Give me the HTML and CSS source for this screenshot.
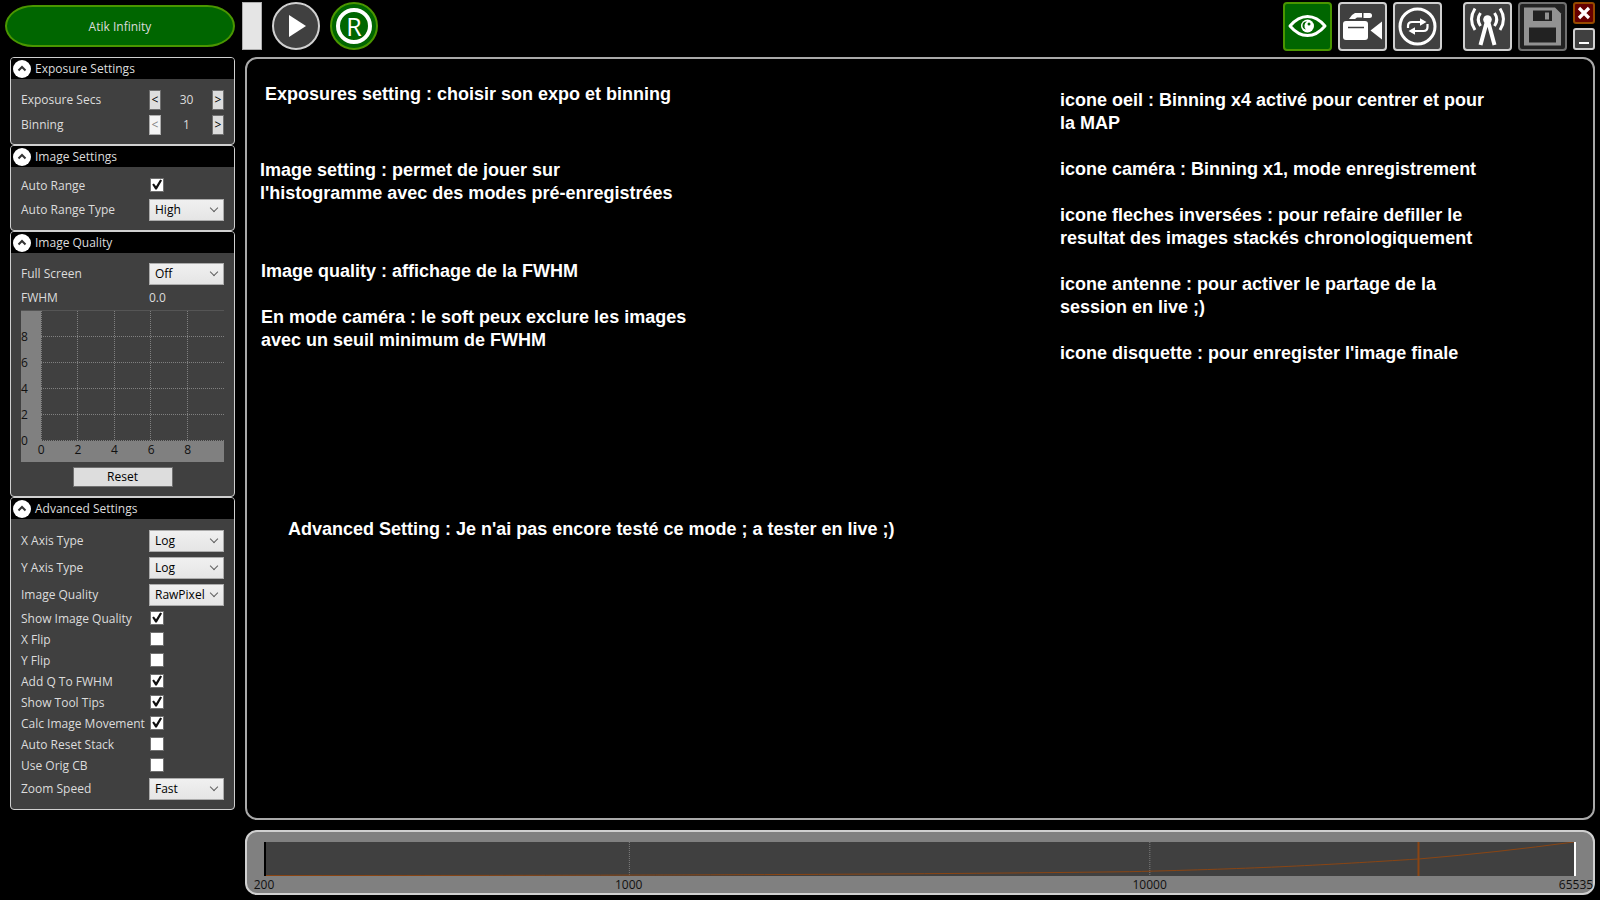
FILE: index.html
```html
<!DOCTYPE html>
<html lang="en">
<head>
<meta charset="utf-8">
<title>Atik Infinity</title>
<link rel="stylesheet" href="styles.css">
</head>
<body>
<div class="app">
  <header class="toolbar">
    <button class="camera-name">Atik Infinity</button>
    <button class="slim" aria-label="Collapse panel"></button>
    <button class="round play" aria-label="Play"><svg viewBox="0 0 44 44"><path d="M15 11l17 11-17 11z" fill="#fff"/></svg></button>
    <button class="round reset-stack" aria-label="Reset stack"><span class="ring">R</span></button>
    <div class="modes">
      <button class="tool active" aria-label="Preview"><svg viewBox="2 2 45 45"><path d="M7 24Q15 14.500 24.500 14.500T42 24Q34 33.500 24.500 33.500T7 24z" fill="none" stroke="#fff" stroke-width="3" stroke-linejoin="round"/><circle cx="24.500" cy="24" r="6.500" fill="#fff"/><path d="M24 19.500a4 4 0 0 0-1 8 5 5 0 0 1 1-8z" fill="#060"/><circle cx="26" cy="22" r="1.500" fill="#060"/></svg></button>
      <button class="tool" aria-label="Record"><svg viewBox="2 2 45 45" fill="#fff"><rect x="5" y="19" width="25" height="19" rx="3"/><path d="M10 25.500h16" stroke="#404040" stroke-width="1.500"/><path d="M32.500 28.500L44 19.500v18zM11 17l3-4 3-2h7v4.500h-5L17 17z"/><path d="M25.500 11h6q2.500 0 2.500 2.500T31.500 16h-6z"/></svg></button>
      <button class="tool" aria-label="Replay"><svg viewBox="2 2 45 45"><g fill="none" stroke="#fff"><circle cx="24.500" cy="24.500" r="17.500" stroke-width="3"/><path d="M15 26v-2q0-4 4-4h9M34.500 22v3q0 4-4 4H21" stroke-width="2.200"/></g><path d="M27 16.200l6.500 3.800-6.500 3.800zM22 25.200L15.500 29l6.500 3.800z" fill="#fff"/></svg></button>
      <button class="tool share" aria-label="Broadcast"><svg viewBox="2 2 45 45" fill="none" stroke="#fff"><circle cx="24.500" cy="17.500" r="4.300" fill="#fff" stroke="none"/><path d="M24 19L17.500 43M25 19l6.500 24" stroke-width="4"/><path d="M12 6.500q-7 11 0 21.500M37 6.500q7 11 0 21.500M17.500 11q-4.500 6.500 0 13M31.500 11q4.500 6.500 0 13" stroke-width="3"/></svg></button>
      <button class="tool save" aria-label="Save"><svg viewBox="2 2 45 45"><path d="M6 5.500h31l6 6v32H6z" fill="#929292"/><path d="M15 8.500h19V19H15zM11 25.500h27v15H11z" fill="#222"/><path d="M27 10.500h4v7h-4z" fill="#929292"/></svg></button>
      <div class="window-buttons">
        <button class="win close" aria-label="Close"><svg viewBox="0 0 18 18"><path d="M4 4l10 10M14 4L4 14" stroke="#fff" stroke-width="3.200"/></svg></button>
        <button class="win" aria-label="Minimize"><svg viewBox="0 0 18 18"><path d="M4 13h10" stroke="#fff" stroke-width="2"/></svg></button>
      </div>
    </div>
  </header>

  <aside class="sidebar">
    <section class="panel">
      <h2 class="panel-title"><button class="fold" aria-label="Collapse"><svg viewBox="0 0 18 18"><path d="M5.500 10.500L9 7l3.500 3.500"/></svg></button>Exposure Settings</h2>
      <div class="panel-body exposure">
        <div class="row stepper-row"><span>Exposure Secs</span><div class="stepper"><button>&lt;</button><output>30</output><button>&gt;</button></div></div>
        <div class="row stepper-row"><span>Binning</span><div class="stepper"><button disabled>&lt;</button><output>1</output><button>&gt;</button></div></div>
      </div>
    </section>

    <section class="panel">
      <h2 class="panel-title"><button class="fold" aria-label="Collapse"><svg viewBox="0 0 18 18"><path d="M5.500 10.500L9 7l3.500 3.500"/></svg></button>Image Settings</h2>
      <div class="panel-body range">
        <div class="row check-row"><label for="auto-range">Auto Range</label><input type="checkbox" id="auto-range" checked></div>
        <div class="row select-row"><label for="range-type">Auto Range Type</label><div class="combo"><select id="range-type"><option>High</option></select></div></div>
      </div>
    </section>

    <section class="panel">
      <h2 class="panel-title"><button class="fold" aria-label="Collapse"><svg viewBox="0 0 18 18"><path d="M5.500 10.500L9 7l3.500 3.500"/></svg></button>Image Quality</h2>
      <div class="panel-body quality">
        <div class="row select-row"><label for="full-screen">Full Screen</label><div class="combo"><select id="full-screen"><option>Off</option></select></div></div>
        <div class="row"><span>FWHM</span><span>0.0</span></div>
        <div class="chart">
          <div class="y-axis"><span>8</span><span>6</span><span>4</span><span>2</span><span>0</span></div>
          <svg class="grid" viewBox="0 0 183 130" preserveAspectRatio="none"><path d="M.5 0v130M36.500 0v130M73.500 0v130M109.500 0v130M146.500 0v130M0 25.500h183M0 51.500h183M0 77.500h183M0 103.500h183M0 129.500h183"/></svg>
          <div class="x-axis"><span>0</span><span>2</span><span>4</span><span>6</span><span>8</span></div>
        </div>
        <button class="reset">Reset</button>
      </div>
    </section>

    <section class="panel">
      <h2 class="panel-title"><button class="fold" aria-label="Collapse"><svg viewBox="0 0 18 18"><path d="M5.500 10.500L9 7l3.500 3.500"/></svg></button>Advanced Settings</h2>
      <div class="panel-body advanced">
        <div class="row select-row"><label for="x-axis">X Axis Type</label><div class="combo"><select id="x-axis"><option>Log</option></select></div></div>
        <div class="row select-row"><label for="y-axis">Y Axis Type</label><div class="combo"><select id="y-axis"><option>Log</option></select></div></div>
        <div class="row select-row"><label for="iq">Image Quality</label><div class="combo"><select id="iq"><option>RawPixel</option></select></div></div>
        <div class="checks">
          <div class="row check-row"><label for="c1">Show Image Quality</label><input type="checkbox" id="c1" checked></div>
          <div class="row check-row"><label for="c2">X Flip</label><input type="checkbox" id="c2"></div>
          <div class="row check-row"><label for="c3">Y Flip</label><input type="checkbox" id="c3"></div>
          <div class="row check-row"><label for="c4">Add Q To FWHM</label><input type="checkbox" id="c4" checked></div>
          <div class="row check-row"><label for="c5">Show Tool Tips</label><input type="checkbox" id="c5" checked></div>
          <div class="row check-row"><label for="c6">Calc Image Movement</label><input type="checkbox" id="c6" checked></div>
          <div class="row check-row"><label for="c7">Auto Reset Stack</label><input type="checkbox" id="c7"></div>
          <div class="row check-row"><label for="c8">Use Orig CB</label><input type="checkbox" id="c8"></div>
        </div>
        <div class="row select-row"><label for="zoom">Zoom Speed</label><div class="combo"><select id="zoom"><option>Fast</option></select></div></div>
      </div>
    </section>
  </aside>

  <main class="viewport">
    <div class="notes-left">
      <p class="note-exposure">Exposures setting : choisir son expo et binning</p>
      <p class="note-image">Image setting : permet de jouer sur<br>l'histogramme avec des modes pré-enregistrées</p>
      <div class="note-quality">
        <p>Image quality : affichage de la FWHM</p>
        <p>En mode caméra : le soft peux exclure les images<br>avec un seuil minimum de FWHM</p>
      </div>
      <p class="note-advanced">Advanced Setting : Je n'ai pas encore testé ce mode ; a tester en live ;)</p>
    </div>
    <div class="notes-right">
      <p>icone oeil : Binning x4 activé pour centrer et pour<br>la MAP</p>
      <p>icone caméra : Binning x1, mode enregistrement</p>
      <p>icone fleches inversées : pour refaire defiller le<br>resultat des images stackés chronologiquement</p>
      <p>icone antenne : pour activer le partage de la<br>session en live ;)</p>
      <p>icone disquette : pour enregister l'image finale</p>
    </div>
  </main>

  <footer class="histogram">
    <svg class="curve" viewBox="0 0 1312 34" preserveAspectRatio="none">
      <path class="tick" d="M364.500 0v34M886.500 0v34"/>
      <path class="line" d="M0 33.500C300 33.500 600 33 866 29.700C1000 26.500 1060 23 1156 17C1210 12.500 1260 7 1312 0"/>
      <path class="marker" d="M1156 0v34"/>
    </svg>
    <div class="scale">
      <span style="left:0%">200</span><span style="left:27.8%">1000</span><span style="left:67.5%">10000</span><span style="left:100%">65535</span>
    </div>
  </footer>
</div>
</body>
</html>
```

FILE: styles.css
```css
* { box-sizing: border-box; }
body { margin: 0; background: #000; color: #dcdcdc; font: 12px/16px "Open Sans", "Noto Sans", sans-serif; }
button, select, input { font: inherit; margin: 0; padding: 0; }
button svg { display: block; width: 100%; height: 100%; }
h2, p { margin: 0; }

.app {
  display: grid;
  grid-template: 57px minmax(773px, 1fr) 65px / 225px minmax(0, 1fr);
  grid-template-areas: "top top" "side view" "side hist";
  gap: 0 10px;
  min-height: 100vh;
  padding: 0 5px 5px 10px;
}

/* Toolbar */
.toolbar { grid-area: top; display: flex; align-items: flex-start; padding-top: 2px; margin-left: -5px; }
.camera-name { width: 230px; height: 42px; margin: 3px 7px 0 0; padding-top: 2px; border: 2px solid #4a9600; border-radius: 28px / 21px; background: #060; color: #dcdcdc; }
.slim { width: 20px; height: 48px; margin-right: 10px; border: 1px solid #adadad; background: #e5e5e5; }
.round { width: 48px; height: 48px; margin-right: 10px; border: 2px solid #d0d0d0; border-radius: 50%; background: #404040; }
.reset-stack { display: grid; place-items: center; border-color: #4a9600; background: #060; }
.ring { display: block; width: 36px; height: 36px; border: 4px solid #fff; border-radius: 50%; color: #fff; font-size: 25px; line-height: 29px; }
.modes { display: flex; gap: 6px; margin-left: auto; }
.tool { width: 49px; height: 49px; border: 2px solid #d0d0d0; border-radius: 4px; background: #404040; }
.tool.active { border-color: #4a9600; background: #060; }
.share { margin-left: 15px; }
.save { border-color: #707070; background: #222; }
.window-buttons { display: grid; gap: 4px; align-content: start; }
.win { width: 22px; height: 22px; border: 2px solid #d0d0d0; border-radius: 3px; background: #404040; }
.close { border-color: #964a00; background: #600; }

/* Sidebar */
.sidebar { grid-area: side; }
.panel { border: 1px solid #d0d0d0; border-radius: 4px; background: #404040; overflow: hidden; }
.panel-title { display: flex; align-items: center; gap: 4px; height: 21px; padding-left: 2px; background: #000; font-size: 12px; font-weight: 400; }
.fold { width: 18px; height: 18px; border: 0; border-radius: 50%; background: #fff; }
.fold path { fill: none; stroke: #333; stroke-width: 2; }
.panel-body { padding: 10px; }
.row { display: grid; grid-template-columns: 128px 1fr; align-items: center; white-space: nowrap; }
.stepper-row { height: 25px; }
.stepper { display: grid; grid-template-columns: 12px 1fr 12px; text-align: center; align-items: center; }
.stepper button { height: 20px; border: 1px solid #707070; background: #ddd; color: #000; line-height: 16px; }
.stepper button:disabled { border-color: #adadad; background: #f4f4f4; color: #838383; }
.exposure { padding: 8px 10px 7px; }
.range { padding: 8px 10px 9px; }
.check-row { height: 21px; }
.range .check-row { margin-bottom: 3px; }
input[type="checkbox"] { appearance: none; width: 14px; height: 14px; margin: 0 0 2px 1px; border: 1px solid #707070; background: #fff; }
input[type="checkbox"]:checked::before { content: ""; display: block; width: 12px; height: 12px; background: #111; clip-path: polygon(10% 50%, 24% 42%, 42% 64%, 76% 8%, 92% 16%, 48% 92%, 36% 92%); }
.combo { position: relative; height: 22px; }
.combo::after { content: ""; position: absolute; right: 7px; top: 6px; width: 5px; height: 5px; border: solid #606060; border-width: 0 1px 1px 0; transform: rotate(45deg); pointer-events: none; }
select { appearance: none; display: block; width: 100%; height: 22px; padding-left: 5px; border: 1px solid #acacac; border-radius: 0; background: linear-gradient(#f0f0f0, #e5e5e5); color: #000; }

.quality { padding: 10px 10px 9px; }
.quality .row + .row { margin: 5px 0 4px; }
.chart { display: grid; grid-template: 131px 20px / 20px 1fr; background: #808080; color: #111; border-top: 1px solid #555; }
.grid { width: 100%; height: 130px; background: #404040; }
.grid path { fill: none; stroke: #808080; stroke-dasharray: 1 1; }
.y-axis { display: grid; grid-auto-rows: 26px; align-content: start; padding-top: 18px; height: 131px; }
.x-axis { grid-column: 2; display: grid; grid-template-columns: repeat(5, 20%); margin: 0 18px 0 -18px; text-align: center; }
.reset { display: block; width: 100px; height: 20px; margin: 5px auto 0; border: 1px solid #707070; background: #ddd; color: #000; line-height: 18px; }

.advanced { padding: 11px 10px 9px; }
.advanced > .select-row + .select-row { margin-top: 5px; }
.checks { margin: 2px 0; }

/* Image area */
.viewport { grid-area: view; display: flex; justify-content: space-between; margin-bottom: 10px; border: 2px solid #a9a9a9; border-radius: 12px; color: #fff; font: bold 18px/23px "Liberation Sans", Arial, sans-serif; white-space: nowrap; }
.notes-left { padding: 24px 0 0 13px; }
.note-exposure { margin-left: 5px; }
.note-image { margin-top: 53px; }
.note-quality { margin: 55px 0 0 1px; }
.note-advanced { margin: 166px 0 0 28px; }
.notes-right { width: 533px; padding-top: 30px; }
.notes-right p + p, .note-quality p + p { margin-top: 23px; }

/* Histogram */
.histogram { grid-area: hist; padding: 10px 17px 0; border: 2px solid #d0d0d0; border-radius: 12px; background: #808080; color: #111; }
.curve { display: block; width: 100%; height: 34px; border: solid #000; border-width: 0 2px; border-right-color: #fff; background: #404040; }
.curve path { fill: none; }
.tick { stroke: #808080; stroke-dasharray: 1 1; }
.line { stroke: #8b4513; }
.marker { stroke: #8b4513; stroke-width: 2; }
.scale { position: relative; height: 17px; }
.scale span { position: absolute; top: 1px; transform: translateX(-50%); }
```
